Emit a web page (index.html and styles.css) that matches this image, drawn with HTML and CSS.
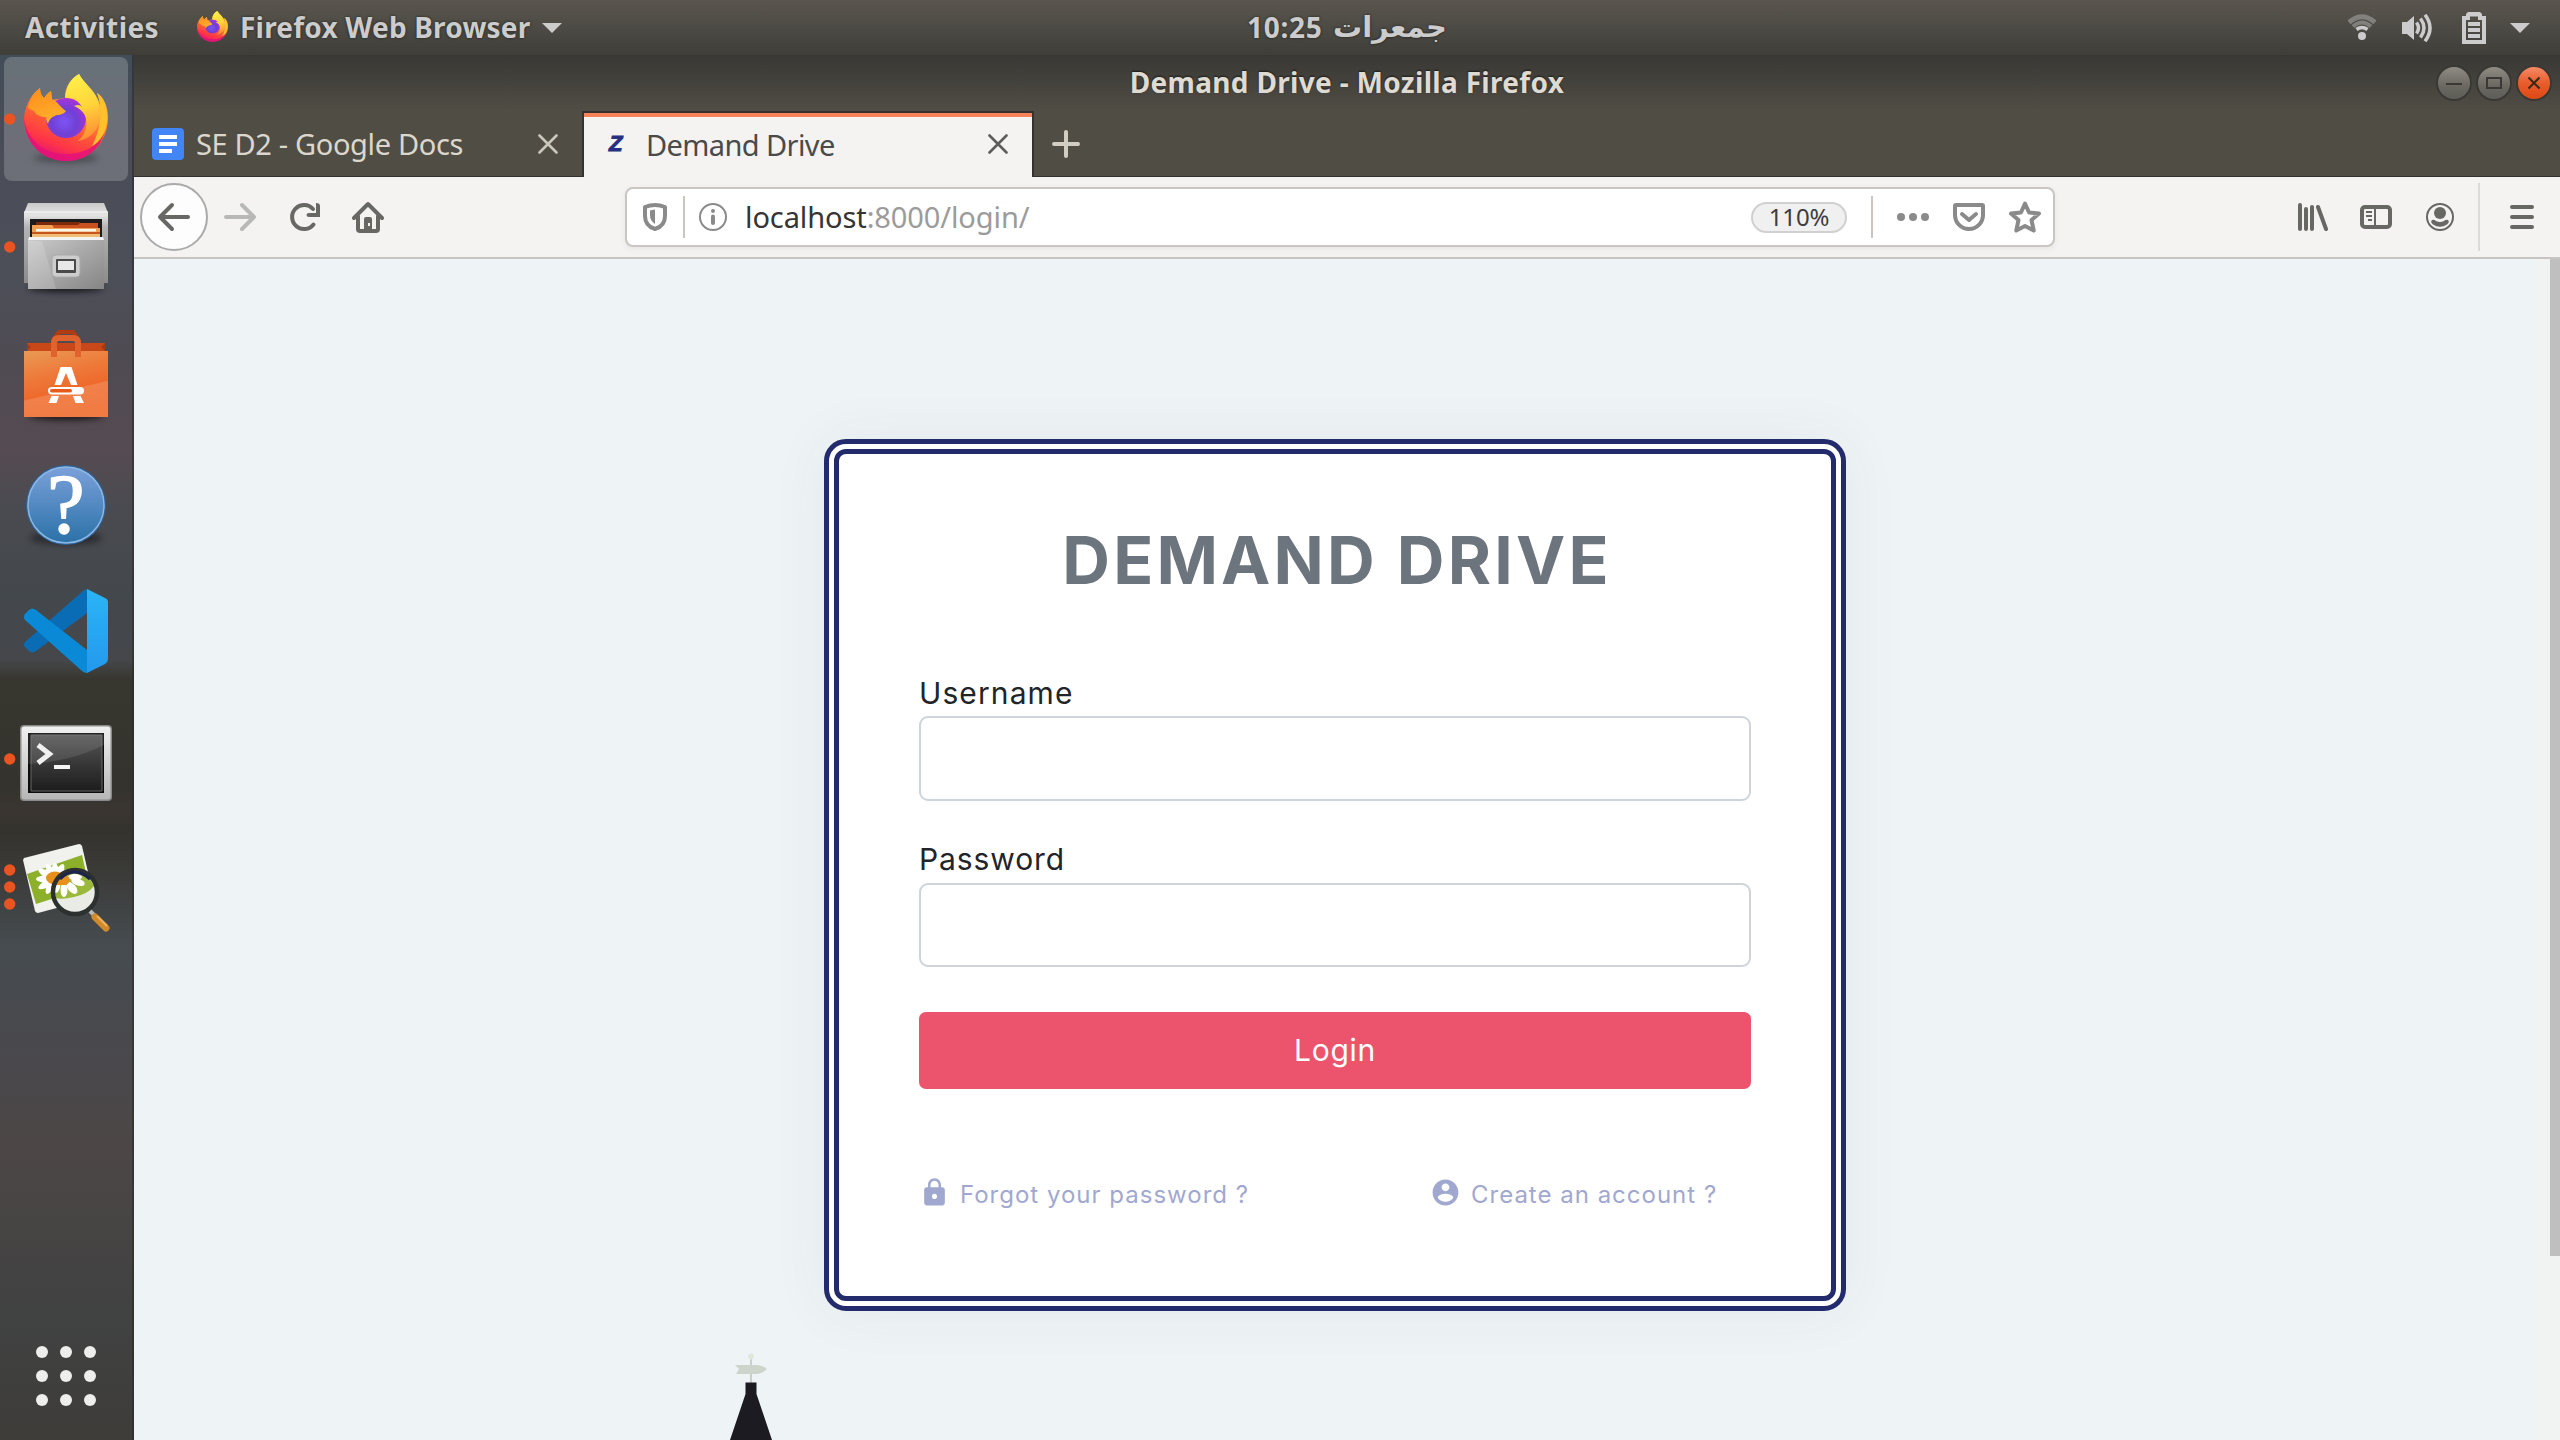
FILE: index.html
```html
<!DOCTYPE html>
<html lang="en">
<head>
<meta charset="utf-8">
<title>Demand Drive</title>
<link rel="stylesheet" href="styles.css">
</head>
<body>
<svg class="defs" width="0" height="0" aria-hidden="true">
  <defs>
    <linearGradient id="ffBody" x1=".75" y1="0" x2=".35" y2="1">
      <stop offset="0" stop-color="#ffe14a"/><stop offset=".35" stop-color="#ffa126"/><stop offset=".62" stop-color="#ff5a36"/><stop offset=".82" stop-color="#ff3547"/><stop offset="1" stop-color="#e3127a"/>
    </linearGradient>
    <radialGradient id="ffGlobe" cx=".45" cy=".6" r=".65">
      <stop offset="0" stop-color="#7d54f4"/><stop offset=".5" stop-color="#7040d4"/><stop offset="1" stop-color="#b030dc"/>
    </radialGradient>
    <linearGradient id="ffFlame" x1=".4" y1="0" x2=".6" y2="1">
      <stop offset="0" stop-color="#fff04a"/><stop offset=".5" stop-color="#ffd43a"/><stop offset="1" stop-color="#ff8a34"/>
    </linearGradient>
    <linearGradient id="ffHead" x1="0" y1="0" x2=".4" y2="1">
      <stop offset="0" stop-color="#ff8a1c"/><stop offset="1" stop-color="#ffb02a"/>
    </linearGradient>
    <symbol id="firefox" viewBox="24 74 84 88">
      <path fill="url(#ffBody)" d="M40 88C30 95 24 108 24 120C25 145 44 161 66 161C90 161 108 142 108 118C108 107 104 97 97 93C99 97 100 101 100 105C96 90 84 84 79 74C70 79 65 87 65 98L52 100L51 91C48 93 46 95 44 98C41 95 40 92 40 88Z"/>
      <path fill="#e3127a" opacity=".85" d="M24 118C27 140 44 154 66 154C84 154 98 146 104 134C98 152 83 161 66 161C43 161 25 144 24 118Z"/>
      <circle cx="66" cy="118" r="20" fill="url(#ffGlobe)"/>
      <path fill="url(#ffFlame)" d="M65 98C66 86 72 78 79 74C84 84 97 91 100 108C103 125 94 138 78 141C88 133 92 113 74 106C79 104 80 105 82 107C78 100 72 97 65 98Z"/>
      <path fill="#ffc02e" d="M97 93C105 100 108 110 107 122C106 132 100 142 92 146C99 134 104 112 97 93Z"/>
      <path fill="url(#ffHead)" d="M40 88C33 94 29 102 28 108L34 111C36 115 41 117 46 117C46 120 47 122 48 124C49 119 53 116 57 115C61 115 65 113 66 111C60 107 57 101 52 99L51 91C48 93 46 95 44 98C41 95 40 92 40 88Z"/>
    </symbol>
    <linearGradient id="metal" x1="0" y1="0" x2="1" y2="1">
      <stop offset="0" stop-color="#cbcbcb"/><stop offset="1" stop-color="#858585"/>
    </linearGradient>
    <linearGradient id="metalTop" x1="0" y1="0" x2="0" y2="1">
      <stop offset="0" stop-color="#c9c9c9"/><stop offset=".15" stop-color="#e4e4e4"/><stop offset=".3" stop-color="#b4b4b4"/><stop offset="1" stop-color="#8c8c8c"/>
    </linearGradient>
    <linearGradient id="bag" x1="0" y1="0" x2=".3" y2="1">
      <stop offset="0" stop-color="#e89a55"/><stop offset=".4" stop-color="#ee7a3a"/><stop offset=".68" stop-color="#ee6a2c"/><stop offset=".7" stop-color="#f2804a"/><stop offset="1" stop-color="#f07c44"/>
    </linearGradient>
    <linearGradient id="help" x1="0" y1="0" x2="0" y2="1">
      <stop offset="0" stop-color="#7ba0da"/><stop offset="1" stop-color="#2a72a8"/>
    </linearGradient>
    <linearGradient id="vsRight" x1="0" y1="0" x2="0" y2="1">
      <stop offset="0" stop-color="#2bb4f6"/><stop offset="1" stop-color="#2399ec"/>
    </linearGradient>
    <linearGradient id="frame" x1="0" y1="0" x2="0" y2="1">
      <stop offset="0" stop-color="#f0f0f0"/><stop offset="1" stop-color="#b6b6b6"/>
    </linearGradient>
    <linearGradient id="screen" x1="0" y1="0" x2="0" y2="1">
      <stop offset="0" stop-color="#565656"/><stop offset=".5" stop-color="#383838"/><stop offset="1" stop-color="#1d1d1d"/>
    </linearGradient>
    <filter id="soft" x="-.5" y="-2" width="2" height="5"><feGaussianBlur stdDeviation="3"/></filter>
  </defs>
</svg>

<header class="topbar">
  <div class="topbar-left">
    <span class="activities">Activities</span>
    <svg class="app-icon" viewBox="24 74 84 88" preserveAspectRatio="none"><use href="#firefox" x="24" y="74" width="84" height="88"/></svg>
    <span class="app-name">Firefox Web Browser</span>
    <svg class="caret" viewBox="0 0 20 10"><path d="M0 0H20L10 10Z"/></svg>
  </div>
  <div class="clock"><span class="time">10:25</span><span class="day" lang="ur">جمعرات</span></div>
  <div class="status">
    <svg width="28" height="28" viewBox="0 0 28 28"><g fill="none" stroke="#ccc"><path stroke-width="5" opacity=".4" d="M1 8.5Q14 -3 27 8.5"/><path stroke-width="4" opacity=".4" d="M5 12.5Q14 4.500 23 12.500"/><path stroke-width="3.600" d="M8.500 15.500Q14 11.500 19.500 15.500"/></g><circle cx="14" cy="22" r="4" fill="#ccc"/></svg>
    <svg width="30" height="28" viewBox="0 0 30 28"><path fill="#ccc" d="M0 8H5L12 2V26L5 20H0Z"/><g fill="none" stroke="#ccc"><path stroke-width="3.500" d="M14.500 8.500Q18.500 14 14.500 19.500"/><path stroke-width="3.500" d="M18.500 4.500Q25.500 14 18.500 23.500"/><path stroke-width="3.500" d="M23 .8Q33 14 23 27.200"/></g></svg>
    <svg width="24" height="32" viewBox="0 0 24 32"><path fill="#ccc" fill-rule="evenodd" d="M0 4H4V2L6 0H18L20 2V4H24V32H0ZM4 8V28H20V8H16V4.500H8V8Z"/><path fill="#ccc" d="M6 10H18V14H6ZM6 16H18V20H6ZM6 22H18V26H6Z"/></svg>
    <svg class="caret" viewBox="0 0 20 10"><path d="M0 0H20L10 10Z"/></svg>
  </div>
</header>

<div class="desktop">
  <nav class="dock">
    <div class="slot active">
      <svg viewBox="0 57 134 124"><ellipse cx="66" cy="158" rx="32" ry="5" opacity=".3" filter="url(#soft)"/><use href="#firefox" x="24" y="74" width="84" height="88"/><circle class="run" cx="9.700" cy="119" r="5.700"/></svg>
    </div>
    <div class="slot">
      <svg viewBox="0 185 134 124">
        <ellipse cx="66" cy="288" rx="38" ry="4" opacity=".7" filter="url(#soft)"/>
        <path fill="url(#metalTop)" d="M28 203H104L108 213V283H24V213Z"/>
        <path fill="#f2f2f2" opacity=".7" d="M24 211H108V213H24Z"/>
        <path fill="#1c1c1c" d="M30 219H102V240H30Z"/>
        <path fill="#7a2a0a" d="M36 222H80L82 226H36Z"/><path fill="#c9501f" d="M33 225H78L80 223H98V240H33Z"/>
        <path fill="#f0a050" d="M32 225H52L54 228H100V240H32Z"/><path fill="#f8f4ee" d="M36 229H96V231.500H36Z"/><path fill="#c9561f" d="M32 232H100V234H32Z"/><path fill="#f0be78" d="M32 234H100V240H32Z"/>
        <path fill="url(#metal)" d="M29 238H103L104 241V289H28V241Z"/><path fill="#f4f4f4" d="M29 237H103L104 240H28Z"/>
        <path fill="#fff" opacity=".15" d="M28 241H42L56 289H28Z"/>
        <rect x="52" y="255" width="28" height="22" rx="4" fill="#cdcdcd" stroke="#aaa"/>
        <rect x="56" y="259" width="20" height="14" rx="1" fill="#4a4a4a"/><rect x="58" y="261" width="16" height="9" fill="#e8e8e8"/>
        <circle class="run" cx="9.700" cy="247" r="5.700"/>
      </svg>
    </div>
    <div class="slot">
      <svg viewBox="0 313 134 124">
        <ellipse cx="66" cy="416" rx="38" ry="4" opacity=".7" filter="url(#soft)"/>
        <path fill="#c8481a" d="M27 343H105V352H27Z"/><path fill="#a83a10" d="M27 343L31 347L27 351ZM105 343L101 347L105 351Z"/>
        <path fill="url(#bag)" d="M24 351H108V417H24Z"/>
        <path fill="none" stroke="#b23c12" stroke-width="4" d="M54 339L59 332H73L78 339"/>
        <path fill="none" stroke="#e0622c" stroke-width="6" d="M54 357V343Q54 338 59 338H73Q78 338 78 343V357"/>
        <path fill="#fff" d="M60.500 367H71.500L77.500 385H71L66 373L61 385H54.500ZM51.500 396H59L56.500 403H48.500ZM73 396H80.500L84 403H75.500Z"/>
        <rect x="48" y="387" width="36" height="7.500" rx="3.700" fill="#fff"/><rect x="50" y="389" width="22" height="3.500" rx="1.700" fill="#e85a1c"/>
      </svg>
    </div>
    <div class="slot">
      <svg viewBox="0 441 134 124">
        <ellipse cx="66" cy="538" rx="36" ry="7" opacity=".4" filter="url(#soft)"/>
        <circle cx="66" cy="505" r="40" fill="#2c629c"/><circle cx="66" cy="505" r="38" fill="url(#help)" stroke="#8fb8e0" stroke-width="1.500"/>
        <text x="66" y="532.500" class="help-mark">?</text>
      </svg>
    </div>
    <div class="slot">
      <svg viewBox="0 569 134 124">
        <path fill="#0a6cb4" d="M25 647Q23 645 25 642L83 591Q86 588 89 590L87 613L36 651Q32 654 29 651Z"/>
        <path fill="#0a8ad6" d="M25 620Q23 617 25 614L29 610Q32 607 36 610L87 650V673Q84 673 82 671Z"/>
        <path fill="url(#vsRight)" d="M87 589L105 598Q108 599 108 602V659Q108 662 105 664L87 673Z"/>
      </svg>
    </div>
    <div class="slot">
      <svg viewBox="0 697 134 124">
        <rect x="20" y="725" width="92" height="76" rx="4" fill="#8a8a8a"/><rect x="21.500" y="726.500" width="89" height="73" rx="3" fill="url(#frame)"/>
        <path fill="#0c0c0c" d="M28 733H104V793H28Z"/><path fill="url(#screen)" stroke="#666" d="M31 735H102V791H31Z"/>
        <path fill="#fff" opacity=".1" d="M28 733H104V745Q70 762 28 764Z"/>
        <path fill="none" stroke="#f0f0f0" stroke-width="5" d="M38 745L49.500 754L38 763"/><path fill="#f4f4f4" d="M54 765H70V769H54Z"/>
        <circle class="run" cx="9.700" cy="759" r="5.700"/>
      </svg>
    </div>
    <div class="slot">
      <svg viewBox="0 825 134 124">
        <path fill="#f1f1ee" d="M24 858L79 844Q81 844 82 846L94 898L38 913Q36 913 35 911L23 860Z"/>
        <path fill="#8db02a" d="M27 874L82 855L89 887L36 904Z"/>
        <g fill="#fff" transform="translate(55 879)"><ellipse rx="19" ry="4.500"/><ellipse rx="19" ry="4.500" transform="rotate(30)"/><ellipse rx="17" ry="4.500" transform="rotate(60)"/><ellipse rx="16" ry="4.500" transform="rotate(90)"/><ellipse rx="17" ry="4.500" transform="rotate(120)"/><ellipse rx="19" ry="4.500" transform="rotate(150)"/></g>
        <ellipse cx="55" cy="878" rx="9" ry="6.500" fill="#e8901c"/>
        <circle cx="75" cy="892" r="21" fill="#e9ece6"/>
        <path fill="#9ab83a" d="M56 882Q62 872 76 872Q90 876 94 886Q88 894 74 897Q62 900 56 898Q54 890 56 882Z"/>
        <g fill="#fff"><ellipse cx="78" cy="882" rx="7" ry="3.500" transform="rotate(20 78 882)"/><ellipse cx="72" cy="888" rx="4" ry="7" transform="rotate(-40 72 888)"/><ellipse cx="64" cy="890" rx="3.500" ry="7"/><ellipse cx="75" cy="877" rx="7" ry="3"/><ellipse cx="57" cy="887" rx="3" ry="6" transform="rotate(15 57 887)"/></g>
        <path fill="#e8901c" d="M56 878Q63 873 69 877Q71 882 66 885L55 885Z"/>
        <circle cx="75" cy="892" r="22" fill="none" stroke="#2c302f" stroke-width="4.500"/><path fill="none" stroke="#1d2350" stroke-width="3" d="M60 879Q74 865 90 879"/>
        <path stroke="#b8b8b8" stroke-width="4" d="M90 911L95 916"/><path stroke="#d08a2c" stroke-width="7" stroke-linecap="round" d="M95 917L106 928"/><path stroke="#f0b45c" stroke-width="2" d="M97 916L107 926"/>
        <circle class="run" cx="9.700" cy="870" r="5.700"/><circle class="run" cx="9.700" cy="887" r="5.700"/><circle class="run" cx="9.700" cy="904" r="5.700"/>
      </svg>
    </div>
    <div class="apps"><i></i><i></i><i></i><i></i><i></i><i></i><i></i><i></i><i></i></div>
  </nav>

  <main class="window">
    <div class="titlebar">
      <span class="window-title">Demand Drive - Mozilla Firefox</span>
      <div class="window-buttons">
        <svg class="wbtn" viewBox="0 0 32 32"><path stroke="#3a3935" stroke-width="2" d="M8 17H24"/></svg>
        <svg class="wbtn" viewBox="0 0 32 32"><rect x="9" y="11" width="14" height="10" fill="none" stroke="#3a3935" stroke-width="2"/></svg>
        <svg class="wbtn close" viewBox="0 0 32 32"><path stroke="#3a2a18" stroke-width="2.200" d="M10.500 10.500L21.500 21.500M21.500 10.500L10.500 21.500"/></svg>
      </div>
    </div>
    <div class="tabs">
      <div class="tab">
        <svg width="32" height="32" viewBox="0 0 32 32"><rect width="32" height="32" rx="4" fill="#4285f4"/><path fill="#fff" d="M7 7H25V11H7ZM7 14H25V18H7ZM7 21H20V25H7Z"/></svg>
        <span class="tab-label docs">SE D2 - Google Docs</span>
        <svg class="tab-x" viewBox="0 0 20 20"><path d="M1.500 1.500L18.500 18.500M18.500 1.500L1.500 18.500"/></svg>
      </div>
      <div class="tab selected">
        <span class="favicon">Z</span>
        <span class="tab-label">Demand Drive</span>
        <svg class="tab-x" viewBox="0 0 20 20"><path d="M1.500 1.500L18.500 18.500M18.500 1.500L1.500 18.500"/></svg>
      </div>
      <svg class="plus" viewBox="0 0 28 28"><path d="M14 2V26M2 14H26"/></svg>
    </div>
    <div class="toolbar">
      <div class="nav">
        <svg width="68" height="68" viewBox="0 0 68 68"><circle cx="34" cy="34" r="33" fill="#fdfdfd" stroke="#aaa" stroke-width="2"/><path class="line" d="M48 34H20M32 22L20 34L32 46"/></svg>
        <svg class="i dim" viewBox="0 0 32 32"><path class="line" d="M2 16H30M18 4L30 16L18 28"/></svg>
        <svg class="i" viewBox="0 0 32 32"><path class="line" d="M25.500 23.500A12 12 0 1 1 25 8"/><path class="fill" d="M28 2Q32 2 32 5V16H21Q18.500 16 18.500 14T21 12H28Z"/></svg>
        <svg class="i" viewBox="0 0 32 32"><path class="line" d="M2 17L16 3L30 17M6 15V28Q6 30 8 30H24Q26 30 26 28V15"/><path class="fill" fill-rule="evenodd" d="M12 30V18Q12 16 14 16H18Q20 16 20 18V30ZM16 22V25H18V22Z"/></svg>
      </div>
      <div class="urlbar">
        <svg class="i grey" viewBox="0 0 32 32"><path class="line" d="M6 6Q16 2 26 6V15Q26 25 16 28Q6 25 6 15Z"/><path class="fill" d="M16 8.500V23Q11 20 11 14V9.500Z"/></svg>
        <span class="sep"></span>
        <svg class="i grey" viewBox="0 0 32 32"><circle cx="16" cy="16" r="13" class="thin"/><circle cx="16" cy="10" r="2" class="fill"/><path class="line" d="M16 15.500V22"/></svg>
        <span class="url"><b>localhost</b>:8000/login/</span>
        <span class="zoom">110%</span>
        <span class="sep"></span>
        <svg class="i grey" viewBox="0 0 32 32"><circle class="fill" cx="4" cy="16" r="4"/><circle class="fill" cx="16" cy="16" r="4"/><circle class="fill" cx="28" cy="16" r="4"/></svg>
        <svg class="i grey" viewBox="0 0 32 32"><path class="line" d="M2 5Q2 4 3 4H29Q30 4 30 5V14A14 14 0 0 1 2 14Z"/><path class="line" d="M9 13L16 19L23 13"/></svg>
        <svg class="i grey" viewBox="0 0 32 32"><path class="line" d="M16 2.500L20 11.500L30 12.500L22.500 19L24.700 29.500L16 25L7.300 29.500L9.500 19L2 12.500L12 11.500Z"/></svg>
      </div>
      <div class="tools">
        <svg class="i" viewBox="0 0 32 32"><path class="line" d="M4 4V28M10 8V28M16 6V28M22 6L30 28"/></svg>
        <svg class="i" viewBox="0 0 32 32"><rect x="2" y="6" width="28" height="20" rx="3" class="line"/><path class="thin" d="M15 6V26M6 11H12M6 15H12M8 19H12"/></svg>
        <svg class="i" viewBox="0 0 32 32"><circle cx="16" cy="16" r="13" class="thin"/><circle cx="16" cy="12" r="6" class="fill"/><path class="fill" d="M8 19Q10 18 12 20Q16 22 20 20Q22 18 24 19Q26 21 23 23.500Q16 28 9 23.500Q6 21 8 19Z"/></svg>
        <span class="tool-sep"></span>
        <svg class="i" viewBox="0 0 32 32"><path class="line" d="M6 6H26M6 16H26M6 26H26"/></svg>
      </div>
    </div>
    <div class="viewport">
      <div class="page">
        <section class="card">
          <h1>DEMAND DRIVE</h1>
          <label class="field"><span>Username</span><input type="text"></label>
          <label class="field second"><span>Password</span><input type="password"></label>
          <button class="login" type="button">Login</button>
          <div class="links">
            <a><svg viewBox="0 0 24 24"><path d="M18 8h-1V6c0-2.760-2.240-5-5-5S7 3.240 7 6v2H6c-1.100 0-2 .9-2 2v10c0 1.100.9 2 2 2h12c1.100 0 2-.9 2-2V10c0-1.100-.9-2-2-2zm-6 9c-1.100 0-2-.9-2-2s.9-2 2-2 2 .9 2 2-.9 2-2 2zm3.100-9H8.900V6c0-1.710 1.390-3.100 3.100-3.100s3.100 1.390 3.100 3.100v2z"/></svg><span>Forgot your password ?</span></a>
            <a><svg viewBox="0 0 24 24"><path d="M12 2C6.480 2 2 6.480 2 12s4.480 10 10 10 10-4.480 10-10S17.520 2 12 2zm0 3c1.660 0 3 1.340 3 3s-1.340 3-3 3-3-1.340-3-3 1.340-3 3-3zm0 14.200c-2.500 0-4.710-1.280-6-3.220.030-1.990 4-3.080 6-3.080 1.990 0 5.970 1.090 6 3.080-1.290 1.940-3.500 3.220-6 3.220z"/></svg><span>Create an account ?</span></a>
          </div>
        </section>
        <svg class="tower" viewBox="0 0 50 90"><path stroke="#b9c4ba" stroke-width="1.500" d="M21 4V33"/><circle cx="21" cy="6.500" r="3" fill="#dfe8df"/><path fill="#ccd4cc" d="M5 15H28Q35 17 37 19Q33 23 28 24H6L9 19Z"/><path fill="#1c1b21" d="M15.500 32.500H26.500V44L42 90H0L15.500 44Z"/></svg>
      </div>
      <div class="scrollbar"><div class="thumb"></div></div>
    </div>
  </main>
</div>
</body>
</html>
```
FILE: styles.css
```css
* { box-sizing: border-box; }
html, body { margin: 0; height: 1440px; overflow: hidden; }
body {
  width: 2560px;
  display: flex;
  flex-direction: column;
  font-family: "Noto Sans", "Open Sans", sans-serif;
  background: #3a3935;
}
svg { display: block; flex: none; }
.defs { position: absolute; }

/* GNOME top bar */
.topbar {
  height: 55px;
  flex: none;
  display: grid;
  grid-template-columns: 1247px auto 1fr;
  background: linear-gradient(#5a564e, #504d47 40%, #3f3e39);
  color: #ccc;
  font-size: 28px;
  font-weight: 700;
  line-height: 54px;
  white-space: nowrap;
  text-shadow: 0 0 3px rgba(0, 0, 0, .6);
}
.topbar-left { display: flex; padding-left: 25px; }
.activities { width: 172px; letter-spacing: .4px; }
.app-icon { width: 31px; height: 31px; margin-top: 11px; }
.app-name { margin-left: 12px; width: 302px; letter-spacing: .2px; }
.caret { width: 20px; height: 10px; margin-top: 23px; fill: #ccc; }
.clock { display: flex; direction: ltr; }
.time { letter-spacing: .7px; width: 86px; }
.day { width: 113px; font-family: "DejaVu Sans", sans-serif; font-size: 29px; font-weight: 700; }
.status { display: flex; align-items: center; justify-content: flex-end; padding-right: 30px; }
.status svg + svg { margin-left: 26px; }
.status svg:nth-child(3) { margin-left: 30px; }
.status .caret { margin-top: 0; margin-left: 24px; }

.desktop { flex: 1; display: flex; min-height: 0; }

/* Dock */
.dock {
  width: 134px;
  flex: none;
  display: flex;
  flex-direction: column;
  gap: 4px;
  padding-top: 2px;
  border-right: 2px solid rgba(40, 40, 38, .55);
  background: linear-gradient(#414d57 0, #4a4c57 80px, #4c4f58 220px, #4f4b53 300px, #564b52 395px, #4a4b50 450px, #43484d 540px, #45474a 605px, #37362f 625px, #34332d 730px, #3a3531 755px, #34332d 775px, #3b3b39 820px, #464c50 890px, #474b4f 930px, #4a484c 1010px, #4c4746 1090px, #454343 1200px, #414242 1260px, #3d3c39 1385px);
}
.slot { height: 124px; flex: none; }
.slot svg { width: 134px; height: 124px; overflow: visible; }
.slot.active { background: linear-gradient(rgba(255, 255, 255, .2), rgba(255, 255, 255, .19)) 4px 0 / 124px 124px no-repeat; clip-path: inset(0 4px 0 4px round 8px); }
.run { fill: #e95420; }
.help-mark { font: 84px "Liberation Serif", serif; fill: #fff; stroke: #fff; stroke-width: 1.5px; text-anchor: middle; }
.apps {
  margin: auto 0 34px 36px;
  display: grid;
  grid-template-columns: repeat(3, 12px);
  gap: 12px;
}
.apps i { height: 12px; border-radius: 50%; background: #eeeeec; }

/* Browser window */
.window { flex: 1; display: flex; flex-direction: column; min-width: 0; }
.titlebar {
  height: 56px;
  flex: none;
  display: grid;
  grid-template-columns: 1fr auto 1fr;
  background: linear-gradient(#3a3834, #3c3a36 10%, #504d45);
}
.window-title {
  grid-column: 2;
  font-size: 28px;
  font-weight: 700;
  line-height: 54px;
  letter-spacing: .32px;
  color: #dfdbd2;
  text-shadow: 0 -1px 2px rgba(0, 0, 0, .6);
}
.window-buttons { display: flex; justify-content: flex-end; gap: 8px; padding: 12px 10px 0 0; }
.wbtn {
  width: 32px;
  height: 32px;
  border-radius: 50%;
  background: linear-gradient(#8f8c84, #6a6861 60%, #5e5c56);
  box-shadow: 0 0 0 2px #3a3834;
}
.wbtn.close { background: linear-gradient(#f58a66, #ea5c2c 50%, #dd4814); }

.tabs { height: 66px; flex: none; display: flex; background: #504d45; box-shadow: inset 0 -1px #33322e; }
.tab { width: 448px; display: flex; align-items: center; padding-left: 18px; color: #dcd7cd; }
.tab.selected {
  width: 452px;
  padding-left: 25px;
  padding-bottom: 2px;
  background: #f4f3f1;
  border: 2px solid #33322e;
  border-bottom: 0;
  box-shadow: inset 0 4px #f58259;
  color: #4a4a4a;
}
.tab-label { font-size: 29px; letter-spacing: -.6px; margin-left: 17px; white-space: nowrap; }
.tab-label.docs { letter-spacing: -.35px; margin-left: 12px; margin-top: -2px; }
.tab-x { width: 20px; height: 20px; margin-left: auto; margin-right: 24px; fill: none; stroke: #ccc7bd; stroke-width: 2.6; stroke-linecap: round; }
.selected .tab-x { stroke: #5c5c5c; }
.favicon { width: 20px; font: italic 700 22px/32px "Liberation Sans", Arial, sans-serif; color: #262f80; -webkit-text-stroke: 1px #262f80; }
.plus { width: 28px; height: 28px; margin: 19px 0 0 18px; stroke: #d2cdc3; stroke-width: 4; stroke-linecap: round; }

.toolbar {
  height: 82px;
  flex: none;
  display: flex;
  align-items: center;
  padding-left: 6px;
  background: #f4f3f1;
  border-bottom: 2px solid #c9c4c0;
}
.toolbar svg { color: #676764; }
.toolbar .i { width: 32px; height: 32px; }
.toolbar .dim { color: #b8b8b6; }
.toolbar .grey { color: #8a8a8a; }
.line { fill: none; stroke: currentColor; stroke-width: 4; stroke-linecap: round; stroke-linejoin: round; }
.thin { fill: none; stroke: currentColor; stroke-width: 2; }
.fill { fill: currentColor; }
.nav { display: flex; align-items: center; gap: 32px; }
.nav svg:first-child { margin-right: -16px; }
.urlbar {
  width: 1430px;
  height: 60px;
  margin-left: 241px;
  display: flex;
  align-items: center;
  padding: 0 12px;
  background: #fff;
  border: 2px solid #c8c5c2;
  border-radius: 8px;
  box-shadow: 0 2px 6px rgba(0, 0, 0, .06);
}
.urlbar .sep { width: 2px; height: 42px; margin: 0 12px; background: #cbc5c1; }
.url { margin-left: 16px; font-size: 29px; line-height: 56px; letter-spacing: -.1px; color: #9b9b9b; }
.url b { font-weight: 400; color: #353535; }
.zoom {
  width: 96px;
  height: 31px;
  margin-left: auto;
  margin-right: 12px;
  border: 2px solid #d0d0d0;
  border-radius: 16px;
  background: #f0f0f0;
  color: #3c3c3c;
  font-size: 24px;
  line-height: 26px;
  letter-spacing: -.2px;
  text-align: center;
}
.zoom ~ .sep { margin-right: 0; }
.zoom ~ svg { margin-left: 24px; }
.tools { display: flex; align-items: center; gap: 32px; margin-left: 241px; }
.tool-sep { width: 2px; height: 68px; margin: 0 -6px 0 -10px; background: #dcdad8; }

/* Page */
.viewport { flex: 1; display: flex; min-height: 0; }
.page {
  flex: 1;
  position: relative;
  overflow: hidden;
  background: #eef3f6;
  font-family: Inter, "Liberation Sans", sans-serif;
}
.scrollbar { width: 24px; padding-left: 14px; background: #f1f2f2; }
.thumb { height: 997px; background: #bfbfbf; }
.card {
  width: 1022px;
  height: 872px;
  margin: 180px auto 0;
  padding: 66px 80px 0;
  border: 15px double #232b6d;
  border-radius: 22px;
  background: #fff;
  box-shadow: 0 0 60px rgba(60, 60, 40, .06);
}
h1 {
  margin: 0 -24px 75px -20px;
  text-align: center;
  font-size: 66px;
  font-weight: 700;
  line-height: 80px;
  letter-spacing: 3.2px;
  color: #6c757d;
}
.field { display: block; font-size: 30px; line-height: 36px; letter-spacing: 1.1px; color: #212529; }
.field span { display: block; margin: 0 0 5px; }
.field input {
  display: block;
  width: 832px;
  height: 85px;
  padding: 0 20px;
  border: 2px solid #ced4da;
  border-radius: 9px;
  background: #fff;
  outline: 0;
}
.field.second { margin-top: 40px; }
.field.second span { margin-bottom: 6px; letter-spacing: .9px; }
.field.second input { height: 84px; }
.login {
  display: block;
  width: 832px;
  height: 77px;
  margin-top: 45px;
  padding: 0;
  border: 0;
  border-radius: 7px;
  background: #ec536c;
  color: #fff;
  font: 400 30px/77px Inter, sans-serif;
  letter-spacing: .7px;
}
.links { margin-top: 88px; display: grid; grid-template-columns: 511px 1fr; color: #a1a8d0; font-size: 24px; line-height: 31px; letter-spacing: 1px; white-space: nowrap; }
.links a { display: flex; gap: 10px; }
.links svg { width: 31px; height: 31px; fill: currentColor; }
.links span { padding-top: 2px; }
.tower { position: absolute; left: 596px; top: 1091px; width: 50px; height: 90px; }
```
